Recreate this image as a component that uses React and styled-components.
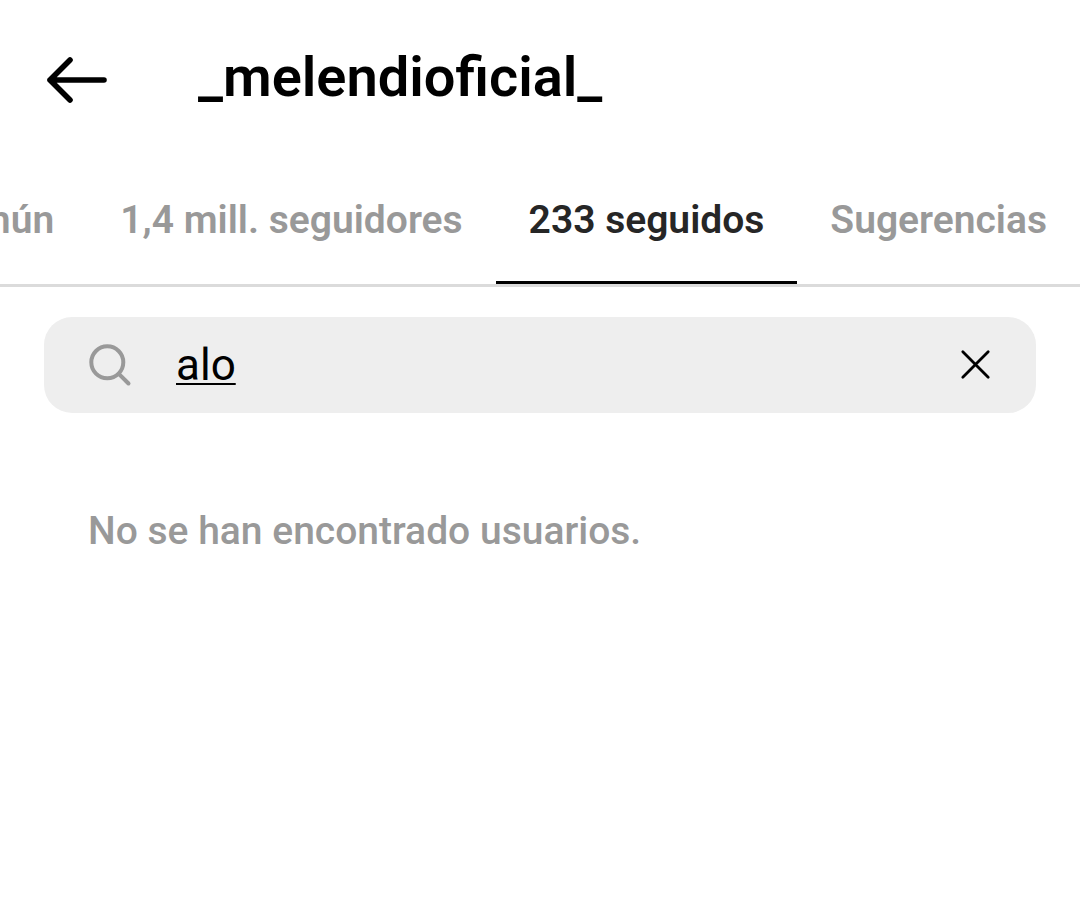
import React, { useState } from 'react';
import styled, { createGlobalStyle } from 'styled-components';

const GlobalStyle = createGlobalStyle`
  * {
    box-sizing: border-box;
  }
  body {
    margin: 0;
    background-color: #ffffff;
    font-family: Roboto, sans-serif;
    overflow-x: hidden;
  }
`

const StyledHeader = styled.header`
  display: flex;
  align-items: center;
  gap: 90px;
  height: 156px;
  padding: 4px 44px 0;
`

const StyledIconButton = styled.button`
  display: flex;
  padding: 0;
  border: none;
  background: none;
  color: #000000;
  cursor: pointer;
`

const StyledHeading = styled.h1`
  margin: 0;
  padding-bottom: 6px;
  font-size: 56px;
  line-height: 64px;
  font-weight: 600;
  color: #000000;
`

const StyledTabs = styled.nav`
  display: flex;
  justify-content: flex-end;
  height: 131px;
  overflow: hidden;
  border-bottom: 3px solid #dbdbdb;
`

const StyledTab = styled.button`
  flex: none;
  padding: 2px 33px 0;
  border: none;
  border-bottom: 3px solid ${({ $active }) => ($active ? '#000000' : 'transparent')};
  background: none;
  font-family: inherit;
  font-size: 39px;
  font-weight: 600;
  color: ${({ $active }) => ($active ? '#262626' : '#999999')};
  white-space: nowrap;
  cursor: pointer;
`

const StyledSearch = styled.label`
  display: flex;
  align-items: center;
  gap: 44px;
  height: 96px;
  margin: 30px 44px 0;
  padding: 0 44px;
  border-radius: 28px;
  background-color: #eeeeee;
`

const StyledInput = styled.input`
  flex: 1;
  min-width: 0;
  padding: 0;
  border: none;
  outline: none;
  background: none;
  font-family: inherit;
  font-size: 44px;
  color: #000000;
  text-decoration: underline;
  text-decoration-thickness: 2px;
  text-underline-offset: 3px;
`

const StyledMessage = styled.p`
  margin: 94px 88px;
  font-size: 39px;
  line-height: 48px;
  font-weight: 500;
  color: #999999;
`

const tabs = [
  { id: 'mutual', label: 'En común' },
  { id: 'followers', label: '1,4 mill. seguidores' },
  { id: 'following', label: '233 seguidos' },
  { id: 'suggested', label: 'Sugerencias' },
]

const BackIcon = () => (
  <svg width="64" height="48" viewBox="0 0 64 48" fill="none" stroke="currentColor" strokeWidth="5.6" strokeLinecap="round" strokeLinejoin="round" aria-hidden="true">
    <path d="M60 24H6M26 4L6 24L26 44" />
  </svg>
)

const SearchIcon = () => (
  <svg width="44" height="44" viewBox="0 0 44 44" fill="none" stroke="#999999" strokeWidth="4" strokeLinecap="round" aria-hidden="true">
    <circle cx="19.3" cy="19.3" r="16" />
    <path d="M30.8 30.8L40.5 40.5" />
  </svg>
)

const ClearIcon = () => (
  <svg width="32" height="32" viewBox="0 0 32 32" fill="none" stroke="currentColor" strokeWidth="2.8" strokeLinecap="round" aria-hidden="true">
    <path d="M2.8 2.8L28.2 28.2M28.2 2.8L2.8 28.2" />
  </svg>
)

const App = () => {
  const [currentTab, setCurrentTab] = useState('following')
  const [query, setQuery] = useState('alo')

  return (
    <>
      <GlobalStyle />
      <StyledHeader>
        <StyledIconButton type="button" aria-label="Atrás"><BackIcon /></StyledIconButton>
        <StyledHeading>_melendioficial_</StyledHeading>
      </StyledHeader>

      <StyledTabs>
        {tabs.map(tab => (
          <StyledTab
            type="button"
            key={tab.id}
            $active={tab.id === currentTab}
            onClick={() => setCurrentTab(tab.id)}
          >
            {tab.label}
          </StyledTab>
        ))}
      </StyledTabs>

      <main>
        <StyledSearch>
          <SearchIcon />
          <StyledInput
            type="text"
            aria-label="Buscar"
            value={query}
            onChange={e => setQuery(e.target.value)}
          />
          <StyledIconButton type="button" aria-label="Borrar" onClick={() => setQuery('')}>
            <ClearIcon />
          </StyledIconButton>
        </StyledSearch>
        <StyledMessage>No se han encontrado usuarios.</StyledMessage>
      </main>
    </>
  )
}

export default App;
